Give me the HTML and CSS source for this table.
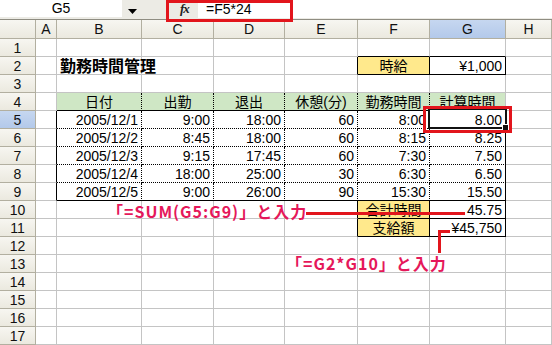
FILE: index.html
```html
<!DOCTYPE html>
<html lang="ja">
<head>
<meta charset="utf-8">
<title>勤務時間管理</title>
<link rel="stylesheet" href="styles.css">
</head>
<body>
<div class="screen">
  <div class="fbar">
    <div class="namebox">G5</div>
    <div class="dd"><svg width="9" height="5" viewBox="0 0 9 5"><path d="M0 0H9L4.5 5Z" fill="#000"/></svg></div>
    <div class="fxbtn">fx</div>
    <div class="finput">=F5*24</div>
  </div>
  <div class="sheet">
    <div class="h"></div><div class="h">A</div><div class="h">B</div><div class="h">C</div><div class="h">D</div><div class="h">E</div><div class="h">F</div><div class="h sel">G</div><div class="h">H</div>

    <div class="r">1</div><div></div><div></div><div></div><div></div><div></div><div class="kb"></div><div class="kb"></div><div></div>

    <div class="r">2</div><div></div><div class="title">勤務時間管理</div><div></div><div></div><div class="kr"></div><div class="yel ctr kr kb">時給</div><div class="n kr kb">¥1,000</div><div></div>

    <div class="r">3</div><div></div><div></div><div></div><div></div><div></div><div></div><div></div><div></div>

    <div class="r">4</div><div></div><div class="grn ctr dr kb">日付</div><div class="grn ctr dr kb">出勤</div><div class="grn ctr dr kb">退出</div><div class="grn ctr dr kb">休憩(分)</div><div class="grn ctr dr kb">勤務時間</div><div class="grn ctr kb">計算時間</div><div></div>

    <div class="r sel">5</div><div class="kr"></div><div class="n dr db">2005/12/1</div><div class="n dr db">9:00</div><div class="n dr db">18:00</div><div class="n dr db">60</div><div class="n dr db">8:00</div><div class="n kr db">8.00</div><div></div>

    <div class="r">6</div><div class="kr"></div><div class="n dr db">2005/12/2</div><div class="n dr db">8:45</div><div class="n dr db">18:00</div><div class="n dr db">60</div><div class="n dr db">8:15</div><div class="n kr db">8.25</div><div></div>

    <div class="r">7</div><div class="kr"></div><div class="n dr db">2005/12/3</div><div class="n dr db">9:15</div><div class="n dr db">17:45</div><div class="n dr db">60</div><div class="n dr db">7:30</div><div class="n kr db">7.50</div><div></div>

    <div class="r">8</div><div class="kr"></div><div class="n dr db">2005/12/4</div><div class="n dr db">18:00</div><div class="n dr db">25:00</div><div class="n dr db">30</div><div class="n dr db">6:30</div><div class="n kr db">6.50</div><div></div>

    <div class="r">9</div><div class="kr"></div><div class="n dr kb">2005/12/5</div><div class="n dr kb">9:00</div><div class="n dr kb">26:00</div><div class="n dr kb">90</div><div class="n dr kb">15:30</div><div class="n kr kb">15.50</div><div></div>

    <div class="r">10</div><div></div><div></div><div></div><div></div><div class="kr"></div><div class="yel ctr kr kb">合計時間</div><div class="n kr kb">45.75</div><div></div>

    <div class="r">11</div><div></div><div></div><div></div><div></div><div class="kr"></div><div class="yel ctr kr kb">支給額</div><div class="n kr kb">¥45,750</div><div></div>

    <div class="r">12</div><div></div><div></div><div></div><div></div><div></div><div></div><div></div><div></div>
    <div class="r">13</div><div></div><div></div><div></div><div></div><div></div><div></div><div></div><div></div>
    <div class="r">14</div><div></div><div></div><div></div><div></div><div></div><div></div><div></div><div></div>
    <div class="r">15</div><div></div><div></div><div></div><div></div><div></div><div></div><div></div><div></div>
    <div class="r">16</div><div></div><div></div><div></div><div></div><div></div><div></div><div></div><div></div>
    <div class="r">17</div><div></div><div></div><div></div><div></div><div></div><div></div><div></div><div></div>
  </div>

  <div class="selbox"><span class="handle"></span></div>
  <div class="redbox rb1"></div>
  <div class="redbox rb2"></div>
  <div class="line l1"></div>
  <div class="line l2"></div>
  <div class="line l3"></div>
  <div class="note note1">「=SUM(G5:G9)」と入力</div>
  <div class="note note2">「=G2*G10」と入力</div>
</div>
</body>
</html>
```

FILE: styles.css
```css
html, body {
  margin: 0;
  padding: 0;
  background: #fff;
}
body {
  font-family: "Liberation Sans", "Noto Sans CJK JP", sans-serif;
  font-size: 14px;
  color: #000;
  overflow: hidden;
}
.screen {
  position: relative;
  width: 552px;
  height: 345px;
  overflow: hidden;
}

/* formula bar */
.fbar {
  display: flex;
  height: 20px;
  box-sizing: border-box;
  border-bottom: 1px solid #8f8d82;
  background: #ecebe5;
}
.namebox {
  width: 122px;
  height: 17px;
  background: #fff;
  display: flex;
  align-items: center;
  justify-content: center;
  line-height: 17px;
}
.dd {
  width: 58px;
  display: flex;
  align-items: flex-start;
  padding: 9px 0 0 6px;
  box-sizing: border-box;
}
.dd svg { display: block; }
.fxbtn {
  width: 18px;
  font-family: "Liberation Serif", serif;
  font-style: italic;
  font-weight: bold;
  font-size: 13px;
  line-height: 18px;
  color: #222;
  letter-spacing: -1px;
}
.finput {
  flex: 1;
  height: 18px;
  background: #fff;
  line-height: 18px;
  padding-left: 8px;
}

/* sheet grid */
.sheet {
  display: grid;
  grid-template-columns: 36px 21px 85px 72px 71px 73px 72px 76px 1fr;
  grid-template-rows: 19px repeat(17, 18px);
}
.sheet > div {
  box-sizing: border-box;
  border-right: 1px solid #c4c4c4;
  border-bottom: 1px solid #c4c4c4;
  display: flex;
  align-items: flex-end;
  padding: 0 3px 0 3px;
  white-space: nowrap;
  line-height: 16px;
  min-width: 0;
}
.sheet > .h,
.sheet > .r {
  background: linear-gradient(#f7f6f1, #ebe9df);
  border-right-color: #b2afa0;
  border-bottom-color: #b2afa0;
  justify-content: center;
  color: #111;
}
.sheet > .h { line-height: 17px; }
.sheet > .sel {
  background: linear-gradient(#c6d7f0, #b3c9ea);
}

.sheet > .n { justify-content: flex-end; }
.sheet > .ctr { justify-content: center; }
.sheet > .title {
  font-weight: bold;
  font-size: 16px;
  font-family: "Noto Sans CJK JP", sans-serif;
  line-height: 17px;
}
.sheet > .grn { background: #cfe7c5; }
.sheet > .yel { background: #ffe98c; }

.sheet > .kr { border-right: 1px solid #000; }
.sheet > .kb { border-bottom: 1px solid #000; }
.sheet > .dr { border-right: 1px dotted #000; }
.sheet > .db { border-bottom: 1px dotted #000; }

/* overlays */
.selbox {
  position: absolute;
  left: 428px;
  top: 108px;
  width: 79px;
  height: 21px;
  box-sizing: border-box;
  border: 2px solid #111;
  box-shadow: inset 0 0 0 1px #fff;
}
.handle {
  position: absolute;
  right: -4px;
  bottom: -4px;
  width: 5px;
  height: 5px;
  background: #111;
  border: 1px solid #fff;
}
.redbox {
  position: absolute;
  box-sizing: border-box;
  border: 3px solid #e2151c;
}
.rb1 { left: 166px; top: 0; width: 127px; height: 22px; }
.rb2 { left: 423px; top: 106px; width: 89px; height: 27px; }

.line {
  position: absolute;
  background: #e2151c;
}
.l1 { left: 306px; top: 212px; width: 159px; height: 3px; }
.l2 { left: 438px; top: 230px; width: 3px; height: 23px; }
.l3 { left: 438px; top: 230px; width: 12px; height: 3px; }

.note {
  position: absolute;
  color: #e5185a;
  font-family: "Noto Sans CJK JP", sans-serif;
  font-weight: bold;
  font-size: 16px;
  line-height: 17px;
  letter-spacing: 1px;
  white-space: nowrap;
}
.note1 { left: 107px; top: 203px; }
.note2 { left: 286px; top: 255px; }
```
